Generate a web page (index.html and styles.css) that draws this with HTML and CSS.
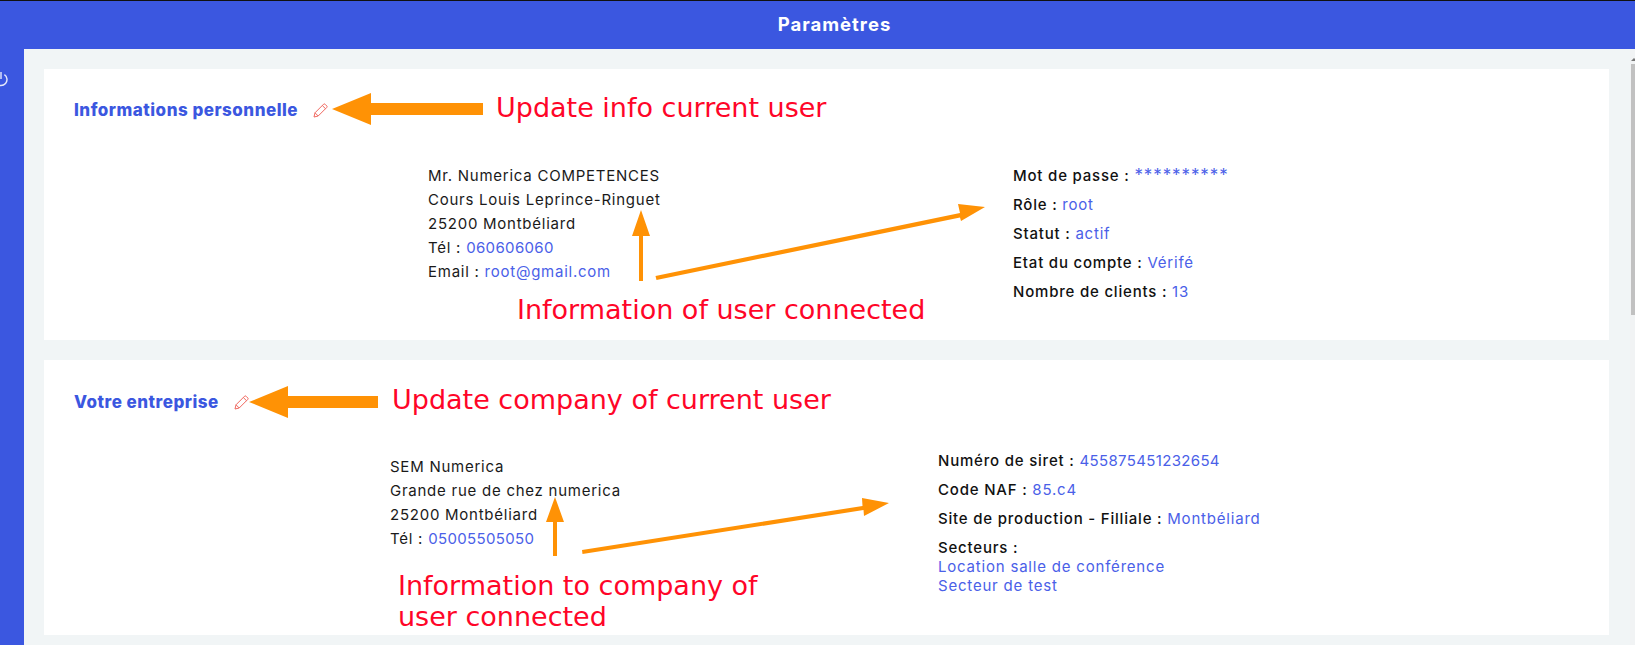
FILE: index.html
```html
<!DOCTYPE html>
<html>
<head>
    <meta charset="UTF-8">
    <title>Paramètres</title>
    <link rel="stylesheet" href="styles.css">
</head>
<body>
<div class="page">
    <header class="topbar">Paramètres</header>
    <div class="layout">
        <aside class="sidebar">
            <svg class="power" width="14" height="16" viewBox="0 0 14 16">
                <path d="M3.6 3.6a6 6 0 1 0 6.8 0M7 1v7"/>
            </svg>
        </aside>
        <main class="content">
            <section class="card">
                <h2 class="card-title">
                    Informations personnelle
                    <svg class="pencil" width="15" height="15" viewBox="0 0 15 15">
                        <path d="M1 14l1-4.2L10.600 1.200a1 1 0 0 1 1.400 0l1.800 1.800a1 1 0 0 1 0 1.400L5.200 13z M2 9.800L5.200 13M9.300 2.500l3.200 3.200"/>
                    </svg>
                </h2>
                <div class="card-body user-body">
                    <ul class="address">
                        <li>Mr. Numerica COMPETENCES</li>
                        <li>Cours Louis Leprince-Ringuet</li>
                        <li>25200 Montbéliard</li>
                        <li>Tél : <a class="num" href="#">060606060</a></li>
                        <li>Email : <a href="#">root@gmail.com</a></li>
                    </ul>
                    <ul class="details">
                        <li>Mot de passe : <span class="stars">**********</span></li>
                        <li>Rôle : <span>root</span></li>
                        <li>Statut : <span>actif</span></li>
                        <li>Etat du compte : <span>Vérifé</span></li>
                        <li>Nombre de clients : <span>13</span></li>
                    </ul>
                </div>
            </section>
            <section class="card card-company">
                <h2 class="card-title">
                    Votre entreprise
                    <svg class="pencil" width="15" height="15" viewBox="0 0 15 15">
                        <path d="M1 14l1-4.2L10.600 1.200a1 1 0 0 1 1.400 0l1.800 1.800a1 1 0 0 1 0 1.400L5.200 13z M2 9.800L5.200 13M9.300 2.500l3.200 3.200"/>
                    </svg>
                </h2>
                <div class="card-body company-body">
                    <ul class="address">
                        <li>SEM Numerica</li>
                        <li>Grande rue de chez numerica</li>
                        <li>25200 Montbéliard</li>
                        <li>Tél : <a class="num" href="#">05005505050</a></li>
                    </ul>
                    <ul class="details">
                        <li>Numéro de siret : <span class="num">455875451232654</span></li>
                        <li>Code NAF : <span>85.c4</span></li>
                        <li>Site de production - Filliale : <span>Montbéliard</span></li>
                        <li class="sectors">
                            Secteurs :
                            <a href="#">Location salle de conférence</a>
                            <a href="#">Secteur de test</a>
                        </li>
                    </ul>
                </div>
            </section>
        </main>
        <div class="scrollbar">
            <div class="scroll-arrow"></div>
            <div class="scroll-thumb"></div>
        </div>
    </div>

    <!-- annotations drawn over the screen -->
    <svg class="arrows" width="1635" height="645" viewBox="0 0 1635 645">
        <polygon points="332,109 371,93 371,103 483,103 483,115 371,115 371,125"/>
        <polygon points="639,281 639,236 632,236 641,210 650,236 643,236 643,281"/>
        <polygon points="655.500,276 960,213 958,204 985,207 961,221 960,217.500 656.500,280"/>
        <polygon points="249,402 288,386 288,396 378,396 378,408 288,408 288,418"/>
        <polygon points="553,556 553,522 546,522 555,497 564,522 557,522 557,556"/>
        <polygon points="582,550 862.500,506 862,498 889,503 864,516 863.500,510 582.500,554"/>
    </svg>
    <div class="note note-info">Update info current user</div>
    <div class="note note-user">Information of user connected</div>
    <div class="note note-update">Update company of current user</div>
    <div class="note note-company">Information to company of<br>user connected</div>
</div>
</body>
</html>
```

FILE: styles.css
```css
* {
    margin: 0;
    padding: 0;
    box-sizing: border-box;
}

html, body {
    width: 100%;
    height: 100%;
    overflow: hidden;
}

ul, li {
    list-style: none;
}

a {
    text-decoration: none;
    color: #4a60e8;
}

.page {
    position: relative;
    display: flex;
    flex-direction: column;
    height: 645px;
    font-family: Inter, "Liberation Sans", sans-serif;
    font-size: 15px;
    letter-spacing: 0.75px;
    color: #1a1a1a;
    background: #f1f5f6;
}

.topbar {
    flex: none;
    height: 49px;
    padding: 0 0 0 34px;
    border-top: 1px solid #111;
    line-height: 46px;
    text-align: center;
    font-size: 18.500px;
    font-weight: 700;
    letter-spacing: 1px;
    color: #fff;
    background: #3b57e0;
}

.layout {
    flex: 1;
    display: flex;
    min-height: 0;
}

.sidebar {
    flex: none;
    width: 24px;
    padding-top: 22px;
    overflow: hidden;
    background: #3b57e0;
}

.power {
    display: block;
    margin-left: -6px;
    fill: none;
    stroke: #e6e9fb;
    stroke-width: 1.400;
}

.content {
    flex: 1;
    padding: 20px 21px 0 20px;
}

.card {
    height: 271px;
    padding: 29px 30px 0;
    background: #fff;
}

.card-company {
    height: 275px;
    margin-top: 20px;
    padding-top: 30px;
}

.card-title {
    display: flex;
    align-items: center;
    gap: 15px;
    height: 24px;
    font-size: 17px;
    font-weight: 800;
    letter-spacing: 0.5px;
    color: #3b57e0;
}

.pencil {
    fill: none;
    stroke: #f0685f;
    stroke-width: 1;
}

.card-body {
    display: flex;
    margin-top: 38px;
}

.user-body {
    margin-top: 39px;
    padding-left: 354px;
}

.company-body {
    padding-left: 316px;
}

.address {
    padding-top: 3px;
}

.address li {
    line-height: 24px;
    white-space: nowrap;
}

.user-body .address {
    width: 585px;
}

.company-body .address {
    width: 548px;
}

.details {
    font-weight: 500;
    letter-spacing: 0.8px;
    color: #111;
}

.user-body .details {
    padding-top: 4px;
}

.company-body .details {
    margin-top: -1px;
}

.details li {
    margin-bottom: 9px;
    line-height: 20px;
    white-space: nowrap;
}

.details span, .details a {
    font-weight: 400;
    color: #4a60e8;
}

.details .num, .address .num {
    letter-spacing: 0.35px;
}

.details .stars {
    font-size: 17px;
    letter-spacing: 0.9px;
}

.details .sectors {
    line-height: 19px;
}

.sectors a {
    display: block;
}

.scrollbar {
    flex: none;
    width: 5px;
    background: #f1f3f4;
}

.scroll-arrow {
    width: 0;
    margin: 9px 0 0 1px;
    border: 3px solid transparent;
    border-top: 0;
    border-bottom: 3px solid #777;
}

.scroll-thumb {
    width: 4px;
    height: 251px;
    margin: 3px 0 0 1px;
    background: #c1c1c1;
}

.arrows {
    position: absolute;
    top: 0;
    left: 0;
    fill: #ff9205;
}

.note {
    position: absolute;
    font-family: "DejaVu Sans", sans-serif;
    font-size: 27px;
    line-height: 31px;
    letter-spacing: 0;
    white-space: nowrap;
    color: #ff0528;
}

.note-info {
    top: 92px;
    left: 496px;
}

.note-user {
    top: 294px;
    left: 517px;
}

.note-update {
    top: 384px;
    left: 392px;
}

.note-company {
    top: 570px;
    left: 398px;
}
```
